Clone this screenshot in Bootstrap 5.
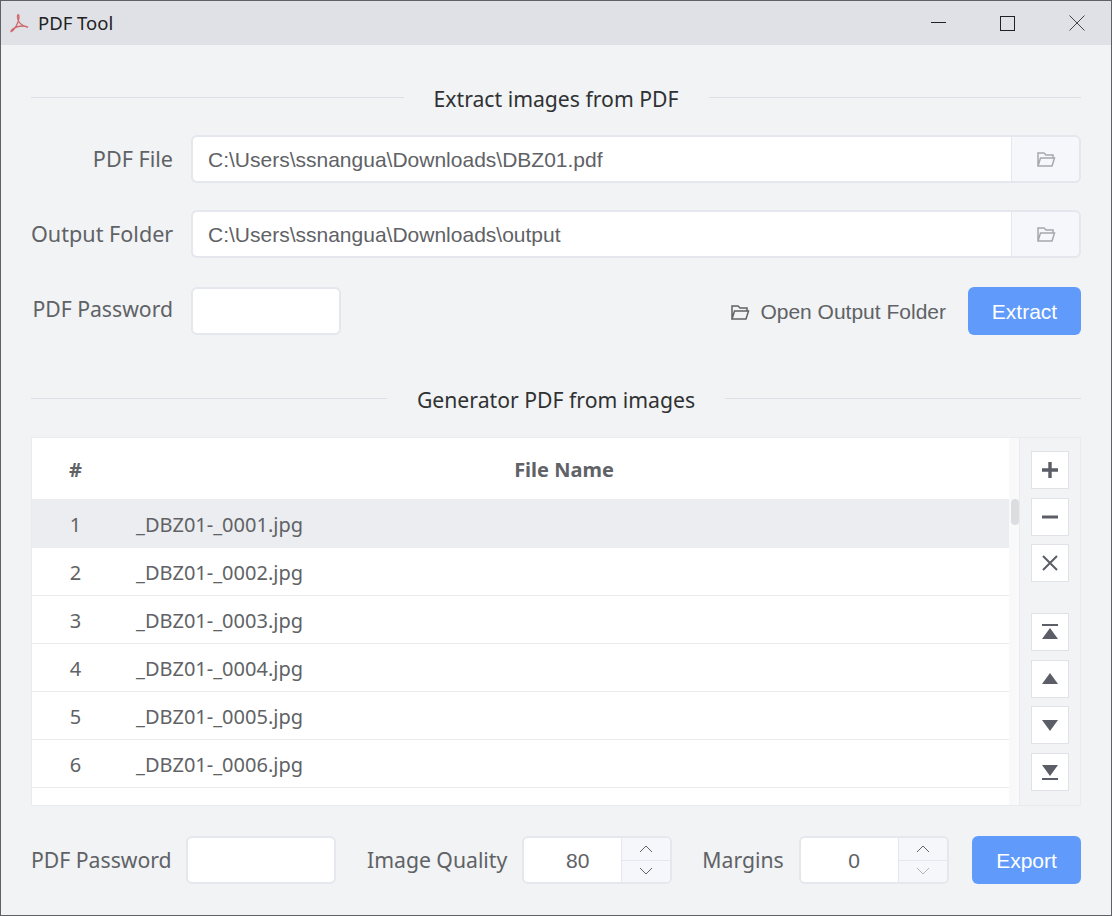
<!DOCTYPE html>
<html lang="en">

<head>
  <meta charset="utf-8" />
  <meta name="viewport" content="width=device-width, initial-scale=1" />
  <title>PDF Tool</title>
  <link href="https://cdn.jsdelivr.net/npm/bootstrap@5.3.0/dist/css/bootstrap.min.css" rel="stylesheet" />
  <style>
    html, body { height: 100%; overflow: hidden; }
    body { background: #f1f3f5; color: #606266; font-family: "Noto Sans", sans-serif; font-size: 20px; }
    .app-window { width: 1112px; height: 916px; border: 1px solid #5f6165; }
    .title-bar { height: 44px; background: #dfe1e6; color: #222; font-size: 18.5px; padding-left: 8px; }
    .win-btn { width: 69px; height: 44px; }
    .app-body { padding: 0 30px; }
    .divider-line { flex: 1; height: 1px; background: #dcdfe6; }
    .divider-text { padding: 4px 30px 0; color: #303133; line-height: 28px; font-size: 21.2px; }
    .first-divider { margin-top: 38px; height: 28px; }
    .second-divider { margin-top: 49px; height: 28px; }
    .field-row { height: 48px; }
    .field-row-first { margin-top: 24px; }
    .field-row-second { margin-top: 27px; }
    .field-row-third { margin-top: 29px; }
    .field-label { flex: none; width: 142px; text-align: right; margin-right: 18px; white-space: nowrap; }
    .field-label, .bottom-label { font-size: 21.2px; }
    .field-label-wide { font-size: 21.6px; }
    .field-label-raised { padding-bottom: 4px; }
    .bottom-label { white-space: nowrap; margin-left: 31px; margin-right: 15px; }
    .bottom-label-first { margin-left: 0; margin-right: 0; width: 155px; }
    .bottom-label-tight { margin-left: 30px; }
    .app-body .form-control { height: 48px; border: 2px solid #e4e7ed; border-radius: 6px; font-family: "Liberation Sans", sans-serif; font-size: 21px; color: #606266; padding: 2px 15px 0; box-shadow: none; }
    .short-input { width: 150px; }
    .path-addon { width: 71px; background: #f5f7fa; border: 2px solid #e4e7ed; border-radius: 0 6px 6px 0; justify-content: center; }
    .app-body .input-group > .form-control { border-right: 0; }
    .open-link { font-family: "Liberation Sans", sans-serif; font-size: 21px; color: #606266; margin-right: 22px; padding-top: 2px; gap: 10px; }
    .app-btn { background: #609bfb; border: 0; color: #fff; font-family: "Liberation Sans", sans-serif; font-size: 21px; border-radius: 6px; height: 48px; padding: 2px 0 0; }
    .app-btn:hover { background: #609bfb; color: #fff; }
    .extract-btn { width: 113px; }
    .export-btn { width: 109px; }
    .list-panel { height: 369px; margin-top: 25px; border: 1px solid #e9ebef; }
    .list-scroll { width: 987px; background: #f9f9f9; overflow: hidden; position: relative; flex: none; }
    .list-inner { width: 977px; height: 100%; background: #fff; }
    .file-table { margin: 0; color: #606266; table-layout: fixed; font-size: 20px; }
    .col-index { width: 87px; }
    .file-table th { height: 61px; vertical-align: middle; border-bottom: 0; color: #606266; font-weight: 700; font-size: 20px; text-align: center; padding: 2px 0 0; }
    .file-table td { height: 48px; vertical-align: middle; border-bottom: 1px solid #e9ebef; padding: 4px 0 0; box-shadow: none; background: #fff; color: #606266; }
    .file-table td:first-child { text-align: center; }
    .file-table td:last-child { padding-left: 17px; }
    .file-table tr.row-active td { background: #ebedf0; border-bottom-color: #ebedf0; }
    .scroll-thumb { position: absolute; right: 0; top: 61px; width: 8px; height: 26px; border-radius: 4px; background: #dcdde0; }
    .side-tools { flex: 1; padding: 13px 11px 0; border-left: 1px solid #e9ebef; }
    .tool-btn { width: 38px; height: 38px; padding: 0; background: #fff; border: 1px solid #e0e2e7; border-radius: 0; display: flex; align-items: center; justify-content: center; margin-bottom: 8.5px; }
    .tool-gap { margin-top: 31px; }
    .bottom-row { margin-top: 30px; height: 48px; }
    .spin-box { width: 150px; height: 48px; border: 2px solid #e4e7ed; border-radius: 6px; background: #fff; overflow: hidden; flex: none; }
    .spin-value { flex: 1; font-family: "Liberation Sans", sans-serif; font-size: 21px; text-align: center; line-height: 46px; padding-left: 10px; }
    .spin-arrows { width: 49px; background: #f5f7fa; border-left: 1px solid #e4e7ed; }
    .spin-arrows > div { flex: 1; display: flex; align-items: center; justify-content: center; }
    .spin-arrows > div + div { border-top: 1px solid #e4e7ed; }
  </style>
</head>

<body>
  <div class="app-window d-flex flex-column">

    <div class="title-bar d-flex align-items-center">
      <svg width="21" height="21" viewBox="0 0 21 21" fill="none" stroke="#d0686c" stroke-width="1.3">
        <path d="M2 18.5C4 18 7 14 9 9C10 6 10.5 2 9.3 1.7C8 1.6 8.3 5 9.5 8C11 11.5 13.5 13 19 14.3C16 12.5 10 12.5 6 14.6C3.5 16 2 17.5 2 18.5Z" />
      </svg>
      <span class="ms-2">PDF Tool</span>
      <div class="ms-auto d-flex">
        <div class="win-btn d-flex align-items-center justify-content-center">
          <svg width="15" height="15"><path d="M0 6.5H15" stroke="#222" /></svg>
        </div>
        <div class="win-btn d-flex align-items-center justify-content-center">
          <svg width="15" height="15"><rect x=".5" y=".5" width="14" height="14" fill="none" stroke="#222" /></svg>
        </div>
        <div class="win-btn d-flex align-items-center justify-content-center">
          <svg width="16" height="16"><path d="M.5.5L15.5 15.5M15.5.5L.5 15.5" stroke="#444" /></svg>
        </div>
      </div>
    </div>

    <div class="app-body">
      <div class="first-divider d-flex align-items-center">
        <div class="divider-line"></div>
        <div class="divider-text">Extract images from PDF</div>
        <div class="divider-line"></div>
      </div>

      <div class="field-row field-row-first d-flex align-items-center">
        <div class="field-label field-label-wide">PDF File</div>
        <div class="input-group flex-fill">
          <input class="form-control" value="C:\Users\ssnangua\Downloads\DBZ01.pdf" />
          <span class="path-addon d-flex align-items-center">
            <svg width="20" height="17" viewBox="0 0 20 17" fill="none" stroke="#a6a8ad" stroke-width="1.5"><path d="M2 15V2H8L10 4H17V7M2 15H16L18.5 7H4.5L2 15Z" /></svg>
          </span>
        </div>
      </div>

      <div class="field-row field-row-second d-flex align-items-center">
        <div class="field-label field-label-wide">Output Folder</div>
        <div class="input-group flex-fill">
          <input class="form-control" value="C:\Users\ssnangua\Downloads\output" />
          <span class="path-addon d-flex align-items-center">
            <svg width="20" height="17" viewBox="0 0 20 17" fill="none" stroke="#a6a8ad" stroke-width="1.5"><path d="M2 15V2H8L10 4H17V7M2 15H16L18.5 7H4.5L2 15Z" /></svg>
          </span>
        </div>
      </div>

      <div class="field-row field-row-third d-flex align-items-center">
        <div class="field-label field-label-raised">PDF Password</div>
        <input class="form-control short-input flex-grow-0" />
        <div class="open-link ms-auto d-flex align-items-center">
          <svg width="20" height="17" viewBox="0 0 20 17" fill="none" stroke="#606266" stroke-width="1.5"><path d="M2 15V2H8L10 4H17V7M2 15H16L18.5 7H4.5L2 15Z" /></svg>
          <span>Open Output Folder</span>
        </div>
        <button class="btn app-btn extract-btn">Extract</button>
      </div>

      <div class="second-divider d-flex align-items-center">
        <div class="divider-line"></div>
        <div class="divider-text">Generator PDF from images</div>
        <div class="divider-line"></div>
      </div>

      <div class="list-panel d-flex">
        <div class="list-scroll">
          <div class="list-inner">
            <table class="table file-table">
              <colgroup><col class="col-index" /><col /></colgroup>
              <thead><tr><th>#</th><th>File Name</th></tr></thead>
              <tbody id="fileRows"></tbody>
            </table>
          </div>
          <div class="scroll-thumb"></div>
        </div>
        <div class="side-tools">
          <div class="tool-btn"><svg width="18" height="18"><path d="M9 1V17M1 9H17" stroke="#5b5e66" stroke-width="3.4" /></svg></div>
          <div class="tool-btn"><svg width="18" height="18"><path d="M1 9H17" stroke="#5b5e66" stroke-width="3" /></svg></div>
          <div class="tool-btn"><svg width="18" height="18"><path d="M2 2L16 16M16 2L2 16" stroke="#5b5e66" stroke-width="2" /></svg></div>
          <div class="tool-btn tool-gap"><svg width="18" height="18"><path d="M1 2H17" stroke="#5b5e66" stroke-width="2" /><path d="M9 5L17 16H1Z" fill="#5b5e66" /></svg></div>
          <div class="tool-btn"><svg width="18" height="18"><path d="M9 3L17 14H1Z" fill="#5b5e66" /></svg></div>
          <div class="tool-btn"><svg width="18" height="18"><path d="M9 15L1 4H17Z" fill="#5b5e66" /></svg></div>
          <div class="tool-btn"><svg width="18" height="18"><path d="M9 13L1 2H17Z" fill="#5b5e66" /><path d="M1 16H17" stroke="#5b5e66" stroke-width="2" /></svg></div>
        </div>
      </div>

      <div class="bottom-row d-flex align-items-center">
        <div class="bottom-label bottom-label-first">PDF Password</div>
        <input class="form-control short-input flex-grow-0" />
        <div class="bottom-label">Image Quality</div>
        <div class="spin-box d-flex">
          <div class="spin-value">80</div>
          <div class="spin-arrows d-flex flex-column">
            <div><svg width="14" height="8"><path d="M1 7L7 1L13 7" fill="none" stroke="#606266" /></svg></div>
            <div><svg width="14" height="8"><path d="M1 1L7 7L13 1" fill="none" stroke="#606266" /></svg></div>
          </div>
        </div>
        <div class="bottom-label bottom-label-tight">Margins</div>
        <div class="spin-box d-flex">
          <div class="spin-value">0</div>
          <div class="spin-arrows d-flex flex-column">
            <div><svg width="14" height="8"><path d="M1 7L7 1L13 7" fill="none" stroke="#606266" /></svg></div>
            <div><svg width="14" height="8"><path d="M1 1L7 7L13 1" fill="none" stroke="#b4b6ba" /></svg></div>
          </div>
        </div>
        <button class="btn app-btn export-btn ms-auto">Export</button>
      </div>
    </div>
  </div>

  <script src="https://cdn.jsdelivr.net/npm/bootstrap@5.3.0/dist/js/bootstrap.bundle.min.js"></script>
  <script>
    // fill the file list
    const fileRows = document.getElementById('fileRows');
    for (let i = 1; i <= 6; i++) {
      const tr = document.createElement('tr');
      if (i === 1) tr.className = 'row-active';
      tr.innerHTML = `<td>${i}</td><td>_DBZ01-_${String(i).padStart(4, '0')}.jpg</td>`;
      fileRows.appendChild(tr);
    }
  </script>
</body>

</html>
